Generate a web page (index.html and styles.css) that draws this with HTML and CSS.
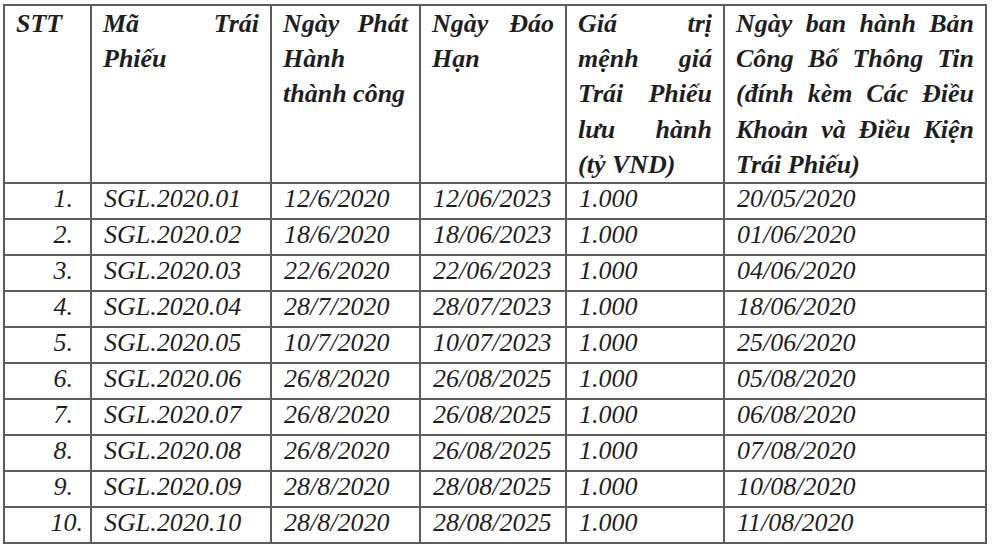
FILE: index.html
```html
<!DOCTYPE html>
<html lang="vi">
<head>
<meta charset="utf-8">
<title>Trái Phiếu</title>
<link rel="stylesheet" href="styles.css">
</head>
<body>
<table class="bonds">
  <colgroup>
    <col class="c1"><col class="c2"><col class="c3"><col class="c4"><col class="c5"><col class="c6">
  </colgroup>
  <thead>
    <tr>
      <th><span class="ln">STT</span></th>
      <th><span class="ln j">Mã Trái</span><span class="ln">Phiếu</span></th>
      <th><span class="ln j">Ngày Phát</span><span class="ln">Hành</span><span class="ln">thành công</span></th>
      <th><span class="ln j">Ngày Đáo</span><span class="ln">Hạn</span></th>
      <th><span class="ln j">Giá trị</span><span class="ln j">mệnh giá</span><span class="ln j">Trái Phiếu</span><span class="ln j">lưu hành</span><span class="ln">(tỷ VND)</span></th>
      <th><span class="ln j">Ngày ban hành Bản</span><span class="ln j">Công Bố Thông Tin</span><span class="ln j">(đính kèm Các Điều</span><span class="ln j">Khoản và Điều Kiện</span><span class="ln">Trái Phiếu)</span></th>
    </tr>
  </thead>
  <tbody>
    <tr><td class="no">1.</td><td>SGL.2020.01</td><td>12/6/2020</td><td>12/06/2023</td><td>1.000</td><td>20/05/2020</td></tr>
    <tr><td class="no">2.</td><td>SGL.2020.02</td><td>18/6/2020</td><td>18/06/2023</td><td>1.000</td><td>01/06/2020</td></tr>
    <tr><td class="no">3.</td><td>SGL.2020.03</td><td>22/6/2020</td><td>22/06/2023</td><td>1.000</td><td>04/06/2020</td></tr>
    <tr><td class="no">4.</td><td>SGL.2020.04</td><td>28/7/2020</td><td>28/07/2023</td><td>1.000</td><td>18/06/2020</td></tr>
    <tr><td class="no">5.</td><td>SGL.2020.05</td><td>10/7/2020</td><td>10/07/2023</td><td>1.000</td><td>25/06/2020</td></tr>
    <tr><td class="no">6.</td><td>SGL.2020.06</td><td>26/8/2020</td><td>26/08/2025</td><td>1.000</td><td>05/08/2020</td></tr>
    <tr><td class="no">7.</td><td>SGL.2020.07</td><td>26/8/2020</td><td>26/08/2025</td><td>1.000</td><td>06/08/2020</td></tr>
    <tr><td class="no">8.</td><td>SGL.2020.08</td><td>26/8/2020</td><td>26/08/2025</td><td>1.000</td><td>07/08/2020</td></tr>
    <tr><td class="no">9.</td><td>SGL.2020.09</td><td>28/8/2020</td><td>28/08/2025</td><td>1.000</td><td>10/08/2020</td></tr>
    <tr><td class="no wide">10.</td><td>SGL.2020.10</td><td>28/8/2020</td><td>28/08/2025</td><td>1.000</td><td>11/08/2020</td></tr>
  </tbody>
</table>
</body>
</html>
```

FILE: styles.css
```css
html, body {
  margin: 0;
  padding: 0;
  background: #ffffff;
}

body {
  padding: 4px 0 0 3px;
  font-family: "Liberation Serif", "Times New Roman", serif;
  color: #1f1f1f;
}

.bonds {
  border-collapse: collapse;
  table-layout: fixed;
  font-size: 26px;
  font-style: italic;
}

.c1 { width: 87px; }
.c2 { width: 180px; }
.c3 { width: 149px; }
.c4 { width: 146px; }
.c5 { width: 158px; }
.c6 { width: 262px; }

.bonds th,
.bonds td {
  border: 2px solid #5c5c5c;
  vertical-align: top;
  text-align: left;
}

.bonds thead tr {
  border-top: 2px solid #3c3c3c;
}

.bonds th {
  font-weight: bold;
  line-height: 35.2px;
  padding: 0 11px;
}

.ln {
  display: block;
  white-space: nowrap;
}

.ln.j {
  text-align: justify;
  text-align-last: justify;
}

.bonds td {
  font-weight: normal;
  line-height: 29px;
  padding: 0 11px 5px 12px;
  white-space: nowrap;
}

.bonds td.no {
  text-align: right;
  padding-right: 17px;
}

.bonds td.no.wide {
  padding-right: 7px;
}
```
